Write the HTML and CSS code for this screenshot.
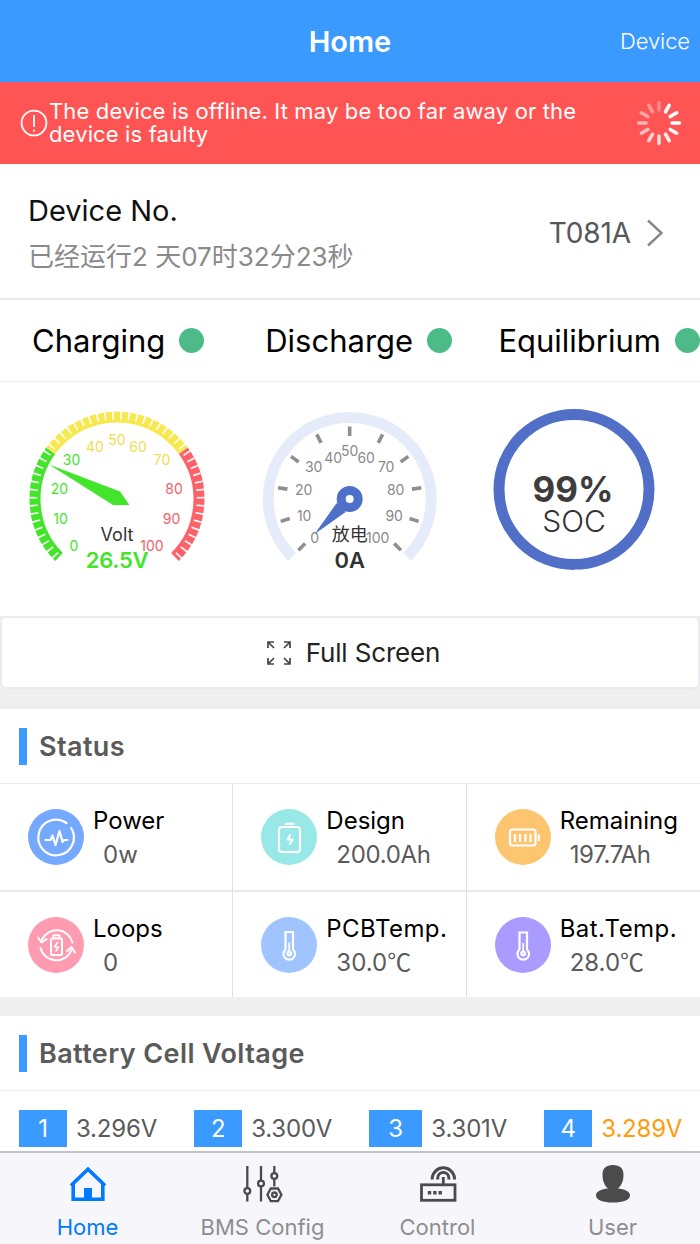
FILE: index.html
```html
<!DOCTYPE html>
<html lang="en">
<head>
    <meta charset="UTF-8">
    <meta name="viewport" content="width=device-width, initial-scale=1.0">
    <title>Home</title>
    <link rel="stylesheet" href="styles.css">
</head>
<body>
    <div class="page">
        <header class="navbar">
            <span></span>
            <h1>Home</h1>
            <a class="nav-link">Device</a>
        </header>

        <div class="alert">
            <svg class="alert-icon" viewBox="0 0 28 28" fill="none" stroke="#fff" stroke-width="1.8">
                <circle cx="14" cy="14" r="12.4"/>
                <path d="M14 6v12M14 20.4v2"/>
            </svg>
            <p>The device is offline. It may be too far away or the device is faulty</p>
            <svg class="spinner" viewBox="-23 -23 46 46" stroke="#fff" stroke-width="3.6" stroke-linecap="round">
                <path d="M0-13v-7.4" opacity=".3"/>
                <path d="M0-13v-7.4" transform="rotate(30)"/>
                <path d="M0-13v-7.4" transform="rotate(60)"/>
                <path d="M0-13v-7.4" transform="rotate(90)"/>
                <path d="M0-13v-7.4" opacity=".95" transform="rotate(120)"/>
                <path d="M0-13v-7.4" opacity=".88" transform="rotate(150)"/>
                <path d="M0-13v-7.4" opacity=".8" transform="rotate(180)"/>
                <path d="M0-13v-7.4" opacity=".72" transform="rotate(210)"/>
                <path d="M0-13v-7.4" opacity=".65" transform="rotate(240)"/>
                <path d="M0-13v-7.4" opacity=".56" transform="rotate(270)"/>
                <path d="M0-13v-7.4" opacity=".48" transform="rotate(300)"/>
                <path d="M0-13v-7.4" opacity=".4" transform="rotate(330)"/>
            </svg>
        </div>

        <section class="device">
            <div>
                <div class="device-title">Device No.</div>
                <div class="device-time">已经运行2 天07时32分23秒</div>
            </div>
            <div class="device-no">
                <span>T081A</span>
                <svg width="18" height="28" viewBox="0 0 18 28" fill="none" stroke="#85878c" stroke-width="2.4"><path d="M2 1.5 15.5 14 2 26.5"/></svg>
            </div>
        </section>

        <section class="switches">
            <div class="switch"><span>Charging</span><i class="dot"></i></div>
            <div class="switch"><span>Discharge</span><i class="dot"></i></div>
            <div class="switch"><span>Equilibrium</span><i class="dot"></i></div>
        </section>

        <section class="gauges">
            <!-- voltage -->
            <svg class="gauge" viewBox="-117 -117 233.33 234">
                <g fill="none" stroke-width="11">
                    <path d="M-58 58A82 82 0 0 1-66.3-48.2" stroke="#43e52b"/>
                    <path d="M-66.3-48.2A82 82 0 0 1 66.3-48.2" stroke="#f8e84f"/>
                    <path d="M66.3-48.2A82 82 0 0 1 58 58" stroke="#fd626a"/>
                </g>
                <path class="teeth" pathLength="100" d="M-59.2 59.2A83.7 83.7 0 1 1 59.2 59.2"/>
                <g class="scale green">
                    <text x="-43" y="52">0</text>
                    <text x="-56.5" y="25.5">10</text>
                    <text x="-57.5" y="-5">20</text>
                    <text x="-45.5" y="-34">30</text>
                </g>
                <g class="scale yellow">
                    <text x="-22" y="-47">40</text>
                    <text x="0" y="-54">50</text>
                    <text x="21" y="-47">60</text>
                    <text x="45" y="-34">70</text>
                </g>
                <g class="scale red">
                    <text x="57" y="-5">80</text>
                    <text x="54.5" y="25.5">90</text>
                    <text x="35" y="52">100</text>
                </g>
                <path d="M-68-34.5 3-7.5 12.5 6H-4z" fill="#43e52b"/>
                <text class="gauge-name" x="0" y="42">Volt</text>
                <text class="gauge-value green" x="0" y="69">26.5V</text>
            </svg>

            <!-- discharge current -->
            <svg class="gauge" viewBox="-116.67 -117 233.33 234">
                <path d="M-57.6 57.6A81.5 81.5 0 1 1 57.6 57.6" fill="none" stroke="#e5ebf8" stroke-width="11"/>
                <g stroke="#8e8f91" stroke-width="3.6">
                    <path d="M0-63v-9.5" transform="rotate(-135)"/>
                    <path d="M0-63v-9.5" transform="rotate(-108)"/>
                    <path d="M0-63v-9.5" transform="rotate(-81)"/>
                    <path d="M0-63v-9.5" transform="rotate(-54)"/>
                    <path d="M0-63v-9.5" transform="rotate(-27)"/>
                    <path d="M0-63v-9.5"/>
                    <path d="M0-63v-9.5" transform="rotate(27)"/>
                    <path d="M0-63v-9.5" transform="rotate(54)"/>
                    <path d="M0-63v-9.5" transform="rotate(81)"/>
                    <path d="M0-63v-9.5" transform="rotate(108)"/>
                    <path d="M0-63v-9.5" transform="rotate(135)"/>
                </g>
                <g class="scale gray">
                    <text x="-35" y="44.5">0</text>
                    <text x="-45.5" y="22">10</text>
                    <text x="-46" y="-4">20</text>
                    <text x="-36" y="-27.5">30</text>
                    <text x="-16.5" y="-36.5">40</text>
                    <text x="0" y="-43">50</text>
                    <text x="16.5" y="-36.5">60</text>
                    <text x="36.5" y="-27.5">70</text>
                    <text x="46" y="-4">80</text>
                    <text x="44.5" y="22">90</text>
                    <text x="28" y="44.5">100</text>
                </g>
                <path d="M-35 35-13 4-4 13z" fill="#4f70c8"/>
                <circle r="8.5" fill="#fff" stroke="#4f70c8" stroke-width="9"/>
                <text class="gauge-name" x="0" y="42">放电</text>
                <text class="gauge-value" x="0" y="69">0A</text>
            </svg>

            <!-- state of charge -->
            <svg class="gauge" viewBox="-107 -107.5 233.33 234">
                <circle r="75" fill="none" stroke="#516fc6" stroke-width="11"/>
                <path d="M0 80.5h5" stroke="#fff" stroke-width=".8"/>
                <text class="soc-value" x="-1" y="12.5">99%</text>
                <text class="soc-name" x="0" y="43">SOC</text>
            </svg>
        </section>

        <button class="fullscreen">
            <svg width="26" height="26" viewBox="0 0 26 26" fill="none" stroke="#444" stroke-width="1.7">
                <path d="M2 8V2h6M2 2l6 6M18 2h6v6M24 2l-6 6M2 18v6h6M2 24l6-6M18 24h6v-6M24 24l-6-6"/>
            </svg>
            <span>Full Screen</span>
        </button>

        <section class="panel status">
            <h2>Status</h2>
            <div class="status-grid">
                <div class="status-item">
                    <svg class="status-icon" viewBox="0 0 56 56" fill="none" stroke="#fff" stroke-width="2.2" stroke-linecap="round" stroke-linejoin="round">
                        <circle cx="28" cy="28" r="28" fill="#75a8ff" stroke="none"/>
                        <path d="M38.5 14A17.8 17.8 0 1 0 43.2 19"/>
                        <path d="M17.500 31h5l2-4.500 3 9.500 4-14 3 11 1.500-2h3.500"/>
                    </svg>
                    <div><div class="label">Power</div><div class="value">0w</div></div>
                </div>
                <div class="status-item">
                    <svg class="status-icon" viewBox="0 0 56 56" fill="none" stroke="#fff" stroke-width="2.2" stroke-linejoin="round">
                        <circle cx="28" cy="28" r="28" fill="#98e8e8" stroke="none"/>
                        <rect x="18" y="18" width="21" height="25" rx="3"/>
                        <path d="M25 14.8h7.5" stroke-linecap="round"/>
                        <path d="M29.500 25.500 26.500 30.500h5L28.500 35.500"/>
                    </svg>
                    <div><div class="label">Design</div><div class="value ah">200.0Ah</div></div>
                </div>
                <div class="status-item">
                    <svg class="status-icon" viewBox="0 0 56 56" fill="none" stroke="#fff" stroke-width="2.200">
                        <circle cx="28" cy="28" r="28" fill="#fec570" stroke="none"/>
                        <rect x="15" y="20.500" width="25.500" height="16" rx="2.500"/>
                        <path d="M20 25v8M25 25v8M30.500 25v8M35.500 25v8M43.800 25.500v6.500"/>
                    </svg>
                    <div><div class="label">Remaining</div><div class="value ah">197.7Ah</div></div>
                </div>
                <div class="status-item">
                    <svg class="status-icon" viewBox="0 0 56 56" fill="none" stroke="#fff" stroke-width="2" stroke-linecap="round" stroke-linejoin="round">
                        <circle cx="28" cy="28" r="28" fill="#ff9bb0" stroke="none"/>
                        <path d="M44.500 25.500A16.300 16.300 0 0 0 14 22.500M10 20.500l3.500 5 5-3.500"/>
                        <path d="M12.500 31A16.300 16.300 0 0 0 43.500 33M39 34l4.500-4 3.500 5.500"/>
                        <rect x="23" y="21.500" width="11" height="16.500" rx="1"/>
                        <path d="M25.500 21v-2.800h6V21"/>
                        <path d="M29.500 25.500 26.500 30h4L28 34" stroke-width="1.600"/>
                    </svg>
                    <div><div class="label">Loops</div><div class="value">0</div></div>
                </div>
                <div class="status-item">
                    <svg class="status-icon" viewBox="0 0 56 56" fill="none" stroke="#fff" stroke-width="2.200">
                        <circle cx="28" cy="28" r="28" fill="#9fc4ff" stroke="none"/>
                        <path d="M24.500 15h7.500v17.500a5.800 5.800 0 1 1-7.500 0z"/>
                        <path d="M28.200 25.500v9" stroke-width="1.700"/>
                        <circle cx="28.200" cy="36.500" r="1.800"/>
                    </svg>
                    <div><div class="label wide">PCBTemp.</div><div class="value">30.0<span class="unit">℃</span></div></div>
                </div>
                <div class="status-item">
                    <svg class="status-icon" viewBox="0 0 56 56" fill="none" stroke="#fff" stroke-width="2.200">
                        <circle cx="28" cy="28" r="28" fill="#a99bff" stroke="none"/>
                        <path d="M24.500 15.500h7.500v17a5.800 5.800 0 1 1-7.500 0z"/>
                        <path d="M28.200 26v9" stroke-width="1.700"/>
                        <circle cx="28.200" cy="36.500" r="1.800"/>
                    </svg>
                    <div><div class="label wide">Bat.Temp.</div><div class="value">28.0<span class="unit">℃</span></div></div>
                </div>
            </div>
        </section>

        <section class="panel voltage">
            <h2>Battery Cell Voltage</h2>
            <div class="cells">
                <div class="cell"><b>1</b><span>3.296V</span></div>
                <div class="cell"><b>2</b><span>3.300V</span></div>
                <div class="cell"><b>3</b><span>3.301V</span></div>
                <div class="cell low"><b>4</b><span>3.289V</span></div>
            </div>
        </section>

        <nav class="tabbar">
            <a class="tab active">
                <svg width="40" height="40" viewBox="0 0 40 40" fill="none" stroke="#007aff" stroke-width="3.6">
                    <path d="M3 21.500 20 5.200 37 21.500"/>
                    <path d="M5.200 19v16.200h29.600V19"/>
                    <path d="M16 24h8v12h-8z" fill="#007aff" stroke="none"/>
                </svg>
                <span>Home</span>
            </a>
            <a class="tab">
                <svg width="40" height="40" viewBox="0 0 40 40" fill="none" stroke="#4b4b4b" stroke-width="2.300">
                    <path d="M4.300 2v22M4.300 30v7.500M18 2v14.500M18 22.500v15M31.300 2v7M31.300 15v7.500"/>
                    <circle cx="4.300" cy="27" r="2.900"/>
                    <circle cx="18" cy="19.500" r="2.900"/>
                    <circle cx="31.300" cy="12" r="2.900"/>
                    <path d="M27.800 24.500h7.200l3.400 6.300-3.400 6.300h-7.200l-3.400-6.300z"/>
                    <circle cx="31.400" cy="30.800" r="2.300"/>
                </svg>
                <span>BMS Config</span>
            </a>
            <a class="tab">
                <svg width="40" height="40" viewBox="0 0 40 40" fill="none" stroke="#4b4b4b" stroke-width="2.800">
                    <rect x="3.500" y="20.800" width="33.500" height="15.500"/>
                    <path d="M25.300 13v8"/>
                    <path d="M14.200 15.500V14a11.200 11.200 0 0 1 22.300 0v1.500M19.700 15.500V14a5.600 5.600 0 0 1 11.200 0v1.500" stroke-width="3"/>
                    <path d="M9.800 28.800h3.400M15.200 28.800h3.400M20.500 28.800h3.400" stroke-width="3.400"/>
                </svg>
                <span>Control</span>
            </a>
            <a class="tab">
                <svg width="40" height="40" viewBox="0 0 40 40" fill="#4b4b4b">
                    <path d="M20 1C27 1 30.500 4.500 30.500 10.500C30.500 17 28.500 21.500 25 24.500C32 25 37 27.500 37 31.500C37 36 30 38.500 20 38.500S3 36 3 31.500C3 27.500 8 25 15 24.500C11.500 21.500 9.500 17 9.500 10.500C9.500 4.500 13 1 20 1z"/>
                </svg>
                <span>User</span>
            </a>
        </nav>
    </div>
</body>
</html>
```
FILE: styles.css
```css
* {
    box-sizing: border-box;
}
body {
    margin: 0;
    font-family: Inter, "Noto Sans CJK SC", sans-serif;
    background: #efefef;
    color: #111;
}
h1, h2, p {
    margin: 0;
}
.page {
    display: flex;
    flex-direction: column;
    width: 700px;
    height: 1244px;
    overflow: hidden;
}
.navbar {
    display: grid;
    grid-template-columns: 1fr auto 1fr;
    align-items: center;
    flex: none;
    height: 82px;
    padding-right: 10px;
    padding-left: 10px;
    background: #3a9aff;
    color: #fff;
}
.navbar h1 {
    font-size: 29px;
    font-weight: 600;
}
.nav-link {
    text-align: right;
    font-size: 22px;
    font-weight: 300;
    letter-spacing: -0.1px;
}
.alert {
    display: flex;
    align-items: center;
    flex: none;
    height: 82px;
    padding: 0 18px 0 20px;
    background: #ff5454;
    color: #fff;
}
.alert-icon {
    flex: none;
    width: 28px;
    height: 28px;
}
.alert p {
    width: 550px;
    padding-left: 1px;
    font-size: 22px;
    line-height: 23px;
    letter-spacing: 0.14px;
}
.spinner {
    width: 46px;
    height: 46px;
    margin-left: auto;
}
.device {
    display: flex;
    align-items: center;
    justify-content: space-between;
    flex: none;
    height: 136px;
    padding: 3px 36px 0 28px;
    background: #fff;
    border-bottom: 2px solid #e8e8e8;
}
.device-title {
    padding-top: 3px;
    font-size: 29px;
    line-height: 46px;
}
.device-time {
    font-size: 26px;
    line-height: 46px;
    color: #8a8a8a;
}
.device-no {
    display: flex;
    align-items: center;
    gap: 15px;
    font-size: 28px;
    letter-spacing: -0.1px;
    color: #55575c;
}
.switches {
    display: grid;
    grid-template-columns: repeat(3, 1fr);
    flex: none;
    height: 82px;
    background: #fff;
    border-bottom: 1px solid #eee;
}
.switch {
    display: flex;
    align-items: center;
    gap: 14px;
    padding-left: 32px;
    font-size: 31px;
    white-space: nowrap;
    color: #000;
}
.dot {
    flex: none;
    width: 25px;
    height: 25px;
    border-radius: 50%;
    background: #4dbb88;
}
.gauges {
    display: grid;
    grid-template-columns: repeat(3, 1fr);
    flex: none;
    height: 234px;
    background: #fff;
}
.gauge {
    display: block;
    width: 100%;
    height: 234px;
    text-anchor: middle;
}
.teeth {
    fill: none;
    stroke: #fff;
    stroke-width: 8;
    stroke-dasharray: 0.42 1.58;
    stroke-dashoffset: -0.8;
}
.scale {
    font-size: 14px;
}
.green {
    fill: #43e52b;
}
.yellow {
    fill: #f3dc55;
}
.red {
    fill: #f4616a;
}
.gray {
    fill: #8a8a8a;
}
.gauge-name {
    font-size: 18px;
    fill: #333;
}
.gauge-value {
    font-size: 22px;
    font-weight: 600;
    letter-spacing: -0.2px;
}
.gauge-value:not(.green) {
    fill: #333;
}
.soc-value {
    font-size: 35px;
    font-weight: 700;
    fill: #3d3d3d;
}
.soc-name {
    font-size: 30px;
    font-weight: 300;
    fill: #333;
}
.fullscreen {
    display: flex;
    align-items: center;
    justify-content: center;
    gap: 14px;
    flex: none;
    height: 73px;
    padding: 0 0 0 6px;
    border: 2px solid #e9ebf0;
    border-radius: 6px;
    background: #fff;
    font-family: inherit;
    font-size: 26px;
    letter-spacing: -0.15px;
    color: #222;
}
.panel {
    flex: none;
    background: #fff;
}
.status {
    margin-top: 20px;
}
.voltage {
    margin-top: 19px;
}
.panel h2 {
    display: flex;
    align-items: center;
    gap: 12px;
    height: 75px;
    padding-left: 19px;
    border-bottom: 1px solid #eee;
    font-size: 27px;
    font-weight: 600;
    letter-spacing: 0.4px;
    color: #5a5a5a;
}
.panel h2::before {
    content: "";
    width: 8px;
    height: 37px;
    background: #3a9aff;
}
.status-grid {
    display: grid;
    grid-template-columns: repeat(3, 1fr);
    grid-template-rows: 108px 105px;
}
.status-item {
    display: flex;
    align-items: center;
    gap: 9px;
    padding-left: 28px;
    border-right: 1px solid #e0e0e0;
    border-bottom: 2px solid #e8e8e8;
    white-space: nowrap;
}
.status-item:nth-child(3n) {
    border-right: none;
}
.status-item:nth-child(n+4) {
    border-bottom: none;
}
.status-icon {
    flex: none;
    width: 56px;
    height: 56px;
}
.label {
    padding-top: 2px;
    font-size: 24px;
    line-height: 34px;
    color: #000;
}
.wide {
    letter-spacing: 0.45px;
}
.value {
    padding-left: 10px;
    font-size: 24px;
    line-height: 34px;
    color: #5a5a5a;
}
.ah {
    letter-spacing: -0.3px;
}
.unit {
    font-family: "Noto Sans CJK SC", sans-serif;
    line-height: 1;
}
.cells {
    display: grid;
    grid-template-columns: repeat(4, 138px);
    gap: 37px;
    padding: 19px 19px 4px;
}
.cell {
    display: flex;
    align-items: center;
    height: 37px;
    gap: 9px;
    font-size: 24px;
    letter-spacing: -0.2px;
    color: #5a5a5a;
}
.cell b {
    flex: 1;
    background: #3a9aff;
    color: #fff;
    font-weight: 400;
    line-height: 37px;
    text-align: center;
}
.low {
    color: #ff9c0a;
}
.tabbar {
    display: grid;
    grid-template-columns: repeat(4, 1fr);
    flex: none;
    height: 93px;
    border-top: 2px solid #c3c3c7;
    background: #f7f6fb;
}
.tab {
    display: flex;
    flex-direction: column;
    align-items: center;
    padding-top: 11px;
    font-size: 22px;
    line-height: 26px;
    color: #8e8e8e;
}
.tab span {
    margin-top: 10px;
}
.tab.active {
    color: #007aff;
}
```
